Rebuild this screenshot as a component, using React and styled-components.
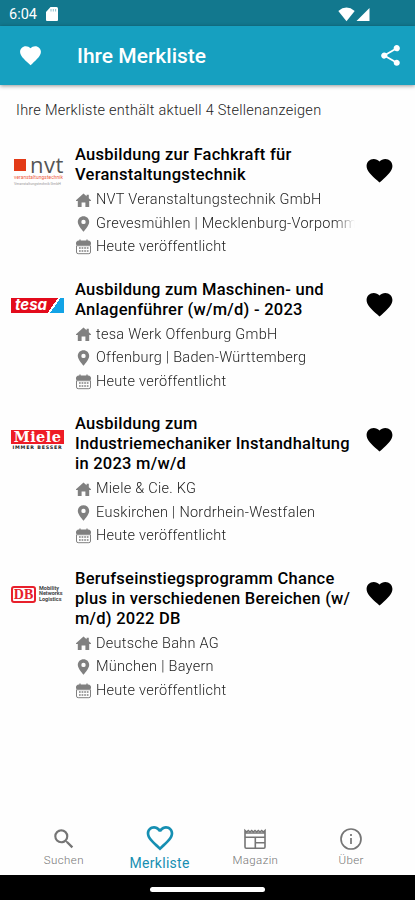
import React from 'react'
import styled, { createGlobalStyle } from 'styled-components'
import {
  MdFavorite,
  MdFavoriteBorder,
  MdShare,
  MdSearch,
} from 'react-icons/md'

const GlobalStyle = createGlobalStyle`
  *, *::before, *::after {
    box-sizing: border-box;
  }
  body {
    margin: 0;
    background: #fff;
    font-family: Roboto, 'Liberation Sans', sans-serif;
  }
`

const Screen = styled.div`
  width: 415px;
  height: 900px;
  display: flex;
  flex-direction: column;
  overflow: hidden;
  background: #fefefe;
`

const StatusBar = styled.div`
  flex: none;
  height: 26px;
  padding: 2px 45px 0 9px;
  display: flex;
  align-items: center;
  background: #12788e;
  color: #fff;
`

const Clock = styled.span`
  width: 37px;
  padding-top: 1px;
  font-size: 14.5px;
  line-height: 20px;
`

const Signals = styled.div`
  margin-left: auto;
  display: flex;
  align-items: center;
  gap: 1px;
`

const AppBar = styled.header`
  flex: none;
  height: 59px;
  padding: 0 12px 0 18px;
  display: flex;
  align-items: center;
  background: #16a0c0;
  color: #fff;
  box-shadow: 0 1px 4px rgba(0, 0, 0, 0.42);
  z-index: 1;
`

const Heading = styled.h1`
  margin: 0 auto 0 34px;
  padding-top: 1px;
  font-size: 21px;
  font-weight: 500;
  line-height: 28px;
`

const Content = styled.main`
  flex: 1;
  padding: 15px 16px 0 11px;
`

const Summary = styled.p`
  margin: 0 0 25px 5px;
  padding-top: 1px;
  font-size: 14.5px;
  font-weight: 300;
  line-height: 19px;
  letter-spacing: 0.26px;
  color: #222;
`

const Job = styled.article`
  display: flex;
  align-items: flex-start;
  margin-bottom: 20.5px;
`

const LogoBox = styled.div`
  flex: none;
  width: 64px;
  height: 51px;
  display: flex;
  align-items: center;
`

const JobText = styled.div`
  flex: none;
  width: 280px;
`

const Title = styled.h2`
  margin: 0 0 3.5px;
  font-size: 16.5px;
  font-weight: 500;
  line-height: 20px;
  letter-spacing: 0.25px;
  color: #000;
  white-space: pre;
`

const Detail = styled.div`
  height: 23.5px;
  display: flex;
  align-items: center;
  gap: 5px;
  padding-left: 1px;
  color: #808080;
`

const DetailText = styled.span`
  flex: 1;
  overflow: hidden;
  white-space: nowrap;
  font-size: 14.5px;
  font-weight: 300;
  line-height: 20px;
  letter-spacing: 0.28px;
  color: #222;
  mask-image: linear-gradient(to right, #000 calc(100% - 20px), transparent);
`

const Saved = styled.div`
  margin-left: auto;
  height: 50px;
  display: flex;
  align-items: center;
  margin-right: 4px;
`

const TabBar = styled.nav`
  flex: none;
  height: 57px;
  padding: 0 16px;
  display: grid;
  grid-template-columns: repeat(4, 1fr);
`

const Tab = styled.div`
  display: flex;
  flex-direction: column;
  align-items: center;
  padding-top: ${props => props.$active ? '4px' : '8px'};
  color: ${props => props.$active ? '#168fb2' : '#757575'};
`

const TabLabel = styled.span`
  font-size: ${props => props.$active ? '14px' : '11.5px'};
  font-weight: ${props => props.$active ? 400 : 300};
  line-height: ${props => props.$active ? '18px' : '16px'};
  letter-spacing: ${props => props.$active ? '0.3px' : '0.4px'};
`

const SystemBar = styled.div`
  flex: none;
  height: 25px;
  display: flex;
  justify-content: center;
  padding-top: 12px;
  background: #000;
`

const HomeHandle = styled.div`
  width: 115px;
  height: 5px;
  border-radius: 3px;
  background: #fff;
`

const NvtLogo = styled.div`
  width: 51px;
  margin: 0 0 1px 2px;
`

const NvtTop = styled.div`
  display: flex;
  align-items: center;
  gap: 4px;
  height: 20px;
`

const NvtSquare = styled.i`
  width: 12px;
  height: 12px;
  margin: 3px 0 0 1px;
  background: #e33a17;
`

const NvtName = styled.span`
  font-family: 'Open Sans', sans-serif;
  font-size: 22px;
  line-height: 20px;
  letter-spacing: 0.5px;
  color: #555;
`

const NvtClaim = styled.div`
  margin: 1px 0 0 1px;
  white-space: nowrap;
  font-size: 4.8px;
  line-height: 6px;
  letter-spacing: 0.1px;
  color: #ef5a3c;
`

const NvtSmall = styled(NvtClaim)`
  font-size: 3.6px;
  line-height: 5px;
  letter-spacing: 0;
  color: #999;
`

const TesaLogo = styled.div`
  width: 53px;
  height: 15px;
  background: linear-gradient(125deg, #e30b1c 0 74%, #fff 74% 78%, #12a3e6 78%);
  color: #fff;
  font: italic 700 15px/14px Inter, sans-serif;
  letter-spacing: 0;
  padding-left: 4px;
`

const MieleLogo = styled.div`
  width: 53px;
  text-align: center;
`

const MieleName = styled.div`
  height: 14px;
  background: #ee1c25;
  color: #fff;
  font: 700 14.5px/14px 'DejaVu Serif', serif;
  letter-spacing: 0.4px;
`

const MieleClaim = styled.div`
  margin-top: 1px;
  white-space: nowrap;
  font: 700 4.8px/5px 'DejaVu Sans', sans-serif;
  letter-spacing: 0.8px;
  color: #222;
`

const DbLogo = styled.div`
  display: flex;
  align-items: center;
  gap: 3px;
`

const DbBox = styled.div`
  width: 25px;
  height: 17px;
  border: 2px solid #e8202c;
  border-radius: 3px;
  color: #e8202c;
  font: 700 14px/13px 'Liberation Serif', serif;
  text-align: center;
`

const DbClaim = styled.div`
  font-size: 5.5px;
  font-weight: 700;
  line-height: 5.6px;
  color: #444;
`

const SdCard = () => (
  <svg width="12" height="15" viewBox="0 0 12 15" fill="currentColor">
    <path d="M4.5 0H10.5Q12 0 12 1.5V13Q12 14 11 14H1Q0 14 0 13V5Z" />
    <path d="M5 2v2.5M7.3 2v2.5M9.6 2v2.5" stroke="#8fbfca" strokeWidth="1" />
  </svg>
)

const Wifi = () => (
  <svg width="17" height="15" viewBox="0 0 17 15" fill="currentColor">
    <path d="M0.3 4Q8.5 -2.8 16.7 4L8.5 14.3Z" />
  </svg>
)

const Cell = () => (
  <svg width="14" height="15" viewBox="0 0 14 15" fill="currentColor">
    <path d="M13.5 1V14H0.5Z" />
  </svg>
)

const House = () => (
  <svg width="15" height="15" viewBox="0 0 15 15" fill="currentColor">
    <path d="M7.5 0.6L10.6 3.3V1.8h2.2v3.5L15 7.3V8H13.2V14H9.4V9.4H5.6V14H1.8V8H0V7.3Z" />
  </svg>
)

const Pin = () => (
  <svg width="15" height="16" viewBox="0 0 15 16" fill="currentColor">
    <path
      fillRule="evenodd"
      d="M7.5 0.3C4.3 0.3 1.8 2.7 1.8 6c0 3.6 5.700 9.700 5.700 9.700S13.200 9.600 13.200 6C13.200 2.700 10.700 0.300 7.500 0.300ZM7.500 3.700a2.200 2.200 0 1 1 0 4.400a2.200 2.200 0 1 1 0 -4.400Z"
    />
  </svg>
)

const Calendar = () => (
  <svg width="15" height="16" viewBox="0 0 15 16" fill="none" stroke="currentColor">
    <path d="M4 0.5V3M11 0.5V3" strokeWidth="1.3" />
    <path d="M0.5 5.5V4Q0.5 2 2.5 2H12.5Q14.5 2 14.5 4V5.5Z" fill="currentColor" />
    <path d="M0.5 6.7V13Q0.5 14.7 2.2 14.7H12.8Q14.5 14.7 14.5 13V6.7Z" />
    <path d="M3 9H12.5M3 12H12.5" strokeWidth="1.7" strokeDasharray="1.7 0.9" />
  </svg>
)

const Newspaper = () => (
  <svg width="26" height="26" viewBox="0 0 26 26" fill="none" stroke="currentColor" strokeWidth="1.6">
    <path d="M3 4.500V21Q3 22.200 4.200 22.200H21.800Q23 22.200 23 21V4.500L21.300 6L19.700 4.500L18 6L16.300 4.500L14.700 6L13 4.500L11.300 6L9.700 4.500L8 6L6.300 4.500L4.700 6Z" />
    <path d="M3 7H23M3 11.300H23M13.300 11.300V22M13.300 16.700H23" />
  </svg>
)

const Info = () => (
  <svg width="26" height="26" viewBox="0 0 26 26" fill="none" stroke="currentColor" strokeWidth="1.7">
    <circle cx="13" cy="13" r="10" />
    <path d="M13 8V10M13 12V18" />
  </svg>
)

const Nvt = () => (
  <NvtLogo>
    <NvtTop>
      <NvtSquare />
      <NvtName>nvt</NvtName>
    </NvtTop>
    <NvtClaim>veranstaltungstechnik</NvtClaim>
    <NvtSmall>Veranstaltungstechnik GmbH</NvtSmall>
  </NvtLogo>
)

const Tesa = () => <TesaLogo>tesa</TesaLogo>

const Miele = () => (
  <MieleLogo>
    <MieleName>Miele</MieleName>
    <MieleClaim>IMMER BESSER</MieleClaim>
  </MieleLogo>
)

const Bahn = () => (
  <DbLogo>
    <DbBox>DB</DbBox>
    <DbClaim>Mobility<br />Networks<br />Logistics</DbClaim>
  </DbLogo>
)

const jobs = [
  {
    logo: <Nvt />,
    title: 'Ausbildung zur Fachkraft für\nVeranstaltungstechnik',
    company: 'NVT Veranstaltungstechnik GmbH',
    place: 'Grevesmühlen | Mecklenburg-Vorpommern',
  },
  {
    logo: <Tesa />,
    title: 'Ausbildung zum Maschinen- und\nAnlagenführer (w/m/d) - 2023',
    company: 'tesa Werk Offenburg GmbH',
    place: 'Offenburg | Baden-Württemberg',
  },
  {
    logo: <Miele />,
    title: 'Ausbildung zum\nIndustriemechaniker Instandhaltung\nin 2023 m/w/d',
    company: 'Miele & Cie. KG',
    place: 'Euskirchen | Nordrhein-Westfalen',
  },
  {
    logo: <Bahn />,
    title: 'Berufseinstiegsprogramm Chance\nplus in verschiedenen Bereichen (w/\nm/d) 2022 DB',
    company: 'Deutsche Bahn AG',
    place: 'München | Bayern',
  },
]

const App = () => {
  return (
    <Screen>
      <GlobalStyle />
      <StatusBar>
        <Clock>6:04</Clock>
        <SdCard />
        <Signals>
          <Wifi />
          <Cell />
        </Signals>
      </StatusBar>
      <AppBar>
        <MdFavorite size={25} />
        <Heading>Ihre Merkliste</Heading>
        <MdShare size={25} />
      </AppBar>
      <Content>
        <Summary>Ihre Merkliste enthält aktuell 4 Stellenanzeigen</Summary>
        {jobs.map(job => (
          <Job key={job.company}>
            <LogoBox>{job.logo}</LogoBox>
            <JobText>
              <Title>{job.title}</Title>
              <Detail><House /><DetailText>{job.company}</DetailText></Detail>
              <Detail><Pin /><DetailText>{job.place}</DetailText></Detail>
              <Detail><Calendar /><DetailText>Heute veröffentlicht</DetailText></Detail>
            </JobText>
            <Saved><MdFavorite size={31} color="#000" /></Saved>
          </Job>
        ))}
      </Content>
      <TabBar>
        <Tab><MdSearch size={26} /><TabLabel>Suchen</TabLabel></Tab>
        <Tab $active><MdFavoriteBorder size={32} /><TabLabel $active>Merkliste</TabLabel></Tab>
        <Tab><Newspaper /><TabLabel>Magazin</TabLabel></Tab>
        <Tab><Info /><TabLabel>Über</TabLabel></Tab>
      </TabBar>
      <SystemBar><HomeHandle /></SystemBar>
    </Screen>
  )
}

export default App
